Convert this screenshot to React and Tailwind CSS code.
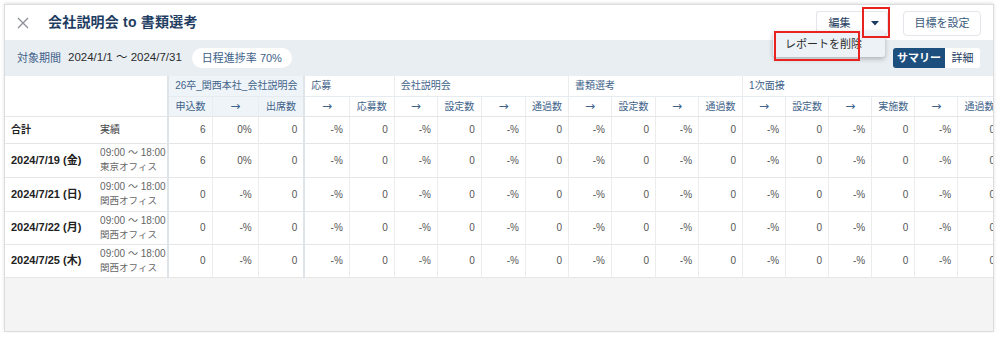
const groups = [
  { label: "26卒_関西本社_会社説明会", cols: ["申込数", "→", "出席数"], tint: true },
  { label: "応募", cols: ["→", "応募数"] },
  { label: "会社説明会", cols: ["→", "設定数", "→", "通過数"] },
  { label: "書類選考", cols: ["→", "設定数", "→", "通過数"] },
  { label: "1次面接", cols: ["→", "設定数", "→", "実施数", "→", "通過数"] },
];

const widths = [44, 46, 46, 45, 45, 43, 44, 44, 43, 43, 44, 43, 44, 43, 43, 43, 43, 43, 43];

const rest = Array.from({ length: 8 }).flatMap(() => ["-%", "0"]);
const filled = ["6", "0%", "0", ...rest];
const empty = ["0", "-%", "0", ...rest];

const rows = [
  { date: "2024/7/19 (金)", office: "東京オフィス", values: filled },
  { date: "2024/7/21 (日)", office: "関西オフィス", values: empty },
  { date: "2024/7/22 (月)", office: "関西オフィス", values: empty },
  { date: "2024/7/25 (木)", office: "関西オフィス", values: empty },
];

// index of the first column in each group, for the stronger left border
const groupStart = [0, 3];

const cellBorder = (i) =>
  groupStart.includes(i) ? "border-l-2 border-l-[#dfe4e9]" : "border-l border-l-[#ececec]";

const App = () => {
  return (
    <div className="w-[998px] h-[337px] bg-white pt-[4px] pl-[4px] font-['Liberation_Sans','Noto_Sans_CJK_JP',sans-serif]">
      <div className="relative w-[990px] h-[328px] border border-[#dcdcdc] shadow-[0_-1px_3px_rgba(0,0,0,0.12)] flex flex-col overflow-hidden">
        {/* header */}
        <div className="h-[35px] shrink-0 flex items-center bg-white">
          <div className="w-[43px] pl-[12px]">
            <svg width="12" height="12" viewBox="0 0 12 12" className="text-[#8a8f95]">
              <path d="M1 1 L11 11 M11 1 L1 11" stroke="currentColor" strokeWidth="1.3" fill="none" />
            </svg>
          </div>
          <h1 className="text-[14px] font-bold text-[#1f3d62] tracking-[0.2px]">会社説明会 to 書類選考</h1>
          <div className="ml-auto flex items-center pr-[12px]">
            <div className="flex h-[24px] mt-[1px]">
              <button className="w-[46px] h-full border border-[#e3e6ea] border-r-0 rounded-l-[3px] text-[11px] text-[#1f3d62] bg-white">
                編集
              </button>
              <button className="w-[26px] h-full border border-[#e3e6ea] rounded-r-[3px] bg-white flex items-center justify-center">
                <svg width="8" height="5" viewBox="0 0 8 5">
                  <path d="M0 0 L8 0 L4 4.5 Z" fill="#1f3d62" />
                </svg>
              </button>
            </div>
            <button className="ml-[15px] w-[78px] h-[25px] mt-[1px] border border-[#e3e6ea] rounded-[4px] text-[11px] text-[#3a5a7c] bg-white">
              目標を設定
            </button>
          </div>
        </div>

        {/* period bar */}
        <div className="h-[36px] shrink-0 bg-[#e9eef3] flex items-center pl-[12px] pr-[13px]">
          <span className="text-[11px] text-[#3d6088]">対象期間</span>
          <span className="ml-[7px] text-[11.5px] text-[#2b2b2b]">2024/1/1 ～ 2024/7/31</span>
          <span className="ml-[10px] h-[20px] px-[10px] rounded-full bg-white text-[11px] text-[#3d6088] flex items-center">
            日程進捗率 70%
          </span>
          <div className="ml-auto flex h-[20px]">
            <span className="w-[52px] bg-[#1d4f7e] text-white text-[11px] font-bold rounded-l-[3px] flex items-center justify-center">
              サマリー
            </span>
            <span className="w-[35px] bg-white text-[#1f3d62] text-[11px] rounded-r-[3px] flex items-center justify-center">
              詳細
            </span>
          </div>
        </div>

        {/* table */}
        <div className="shrink-0 overflow-hidden bg-white">
          <table className="table-fixed border-collapse w-[996px] text-[10px]">
            <colgroup>
              <col className="w-[87px]" />
              <col className="w-[76px]" />
              {widths.map((w, i) => (
                <col key={i} style={{ width: w }} />
              ))}
            </colgroup>
            <thead>
              <tr className="h-[20px]">
                <th colSpan={2} rowSpan={2} className="bg-white border-b border-[#e6e6e6]" />
                {groups.map((g, gi) => (
                  <th
                    key={gi}
                    colSpan={g.cols.length}
                    className={`text-left font-normal pl-[6px] text-[#3f6389] border-b border-[#e6ebf0] ${
                      g.tint ? "bg-[#eff4f9]" : "bg-white"
                    } ${gi < 2 ? "border-l-2 border-l-[#dfe4e9]" : "border-l border-l-[#ececec]"}`}
                  >
                    {g.label}
                  </th>
                ))}
              </tr>
              <tr className="h-[20px]">
                {groups.flatMap((g, gi) =>
                  g.cols.map((c, ci) => {
                    const idx = groups.slice(0, gi).reduce((s, x) => s + x.cols.length, 0) + ci;
                    return (
                      <th
                        key={`${gi}-${ci}`}
                        className={`font-normal text-center text-[#3f6389] border-b border-[#e6e6e6] ${
                          c === "→" ? "text-[12px] font-['DejaVu_Sans',sans-serif]" : ""
                        } ${g.tint ? "bg-[#eff4f9]" : "bg-white"} ${cellBorder(idx)}`}
                      >
                        {c}
                      </th>
                    );
                  })
                )}
              </tr>
            </thead>
            <tbody>
              <tr className="h-[27px] border-b border-[#e6e6e6]">
                <td className="pl-[6px] font-bold text-[#222]">合計</td>
                <td className="pl-[8px] text-[#444]">実績</td>
                {filled.map((v, i) => (
                  <td key={i} className={`text-right pr-[6px] text-[#555] ${cellBorder(i)}`}>
                    {v}
                  </td>
                ))}
              </tr>
              {rows.map((r, ri) => (
                <tr key={ri} className={`${ri < 2 ? "h-[34px]" : "h-[33px]"} border-b border-[#e6e6e6]`}>
                  <td className="pl-[6px] font-bold text-[11px] text-[#222] whitespace-nowrap">{r.date}</td>
                  <td className="pl-[8px] text-[#666] leading-[14px]">
                    <div>09:00 ～ 18:00</div>
                    <div className="text-[9.5px]">{r.office}</div>
                  </td>
                  {r.values.map((v, i) => (
                    <td key={i} className={`text-right pr-[6px] text-[#555] ${cellBorder(i)}`}>
                      {v}
                    </td>
                  ))}
                </tr>
              ))}
            </tbody>
          </table>
        </div>

        <div className="flex-1 bg-[#f4f4f4]" />

        {/* dropdown menu */}
        <div className="absolute left-[768px] top-[26px] w-[112px] h-[26px] bg-[#edf2f7] rounded-[3px] shadow-[0_2px_5px_rgba(0,0,0,0.25)] flex items-center pl-[12px] text-[11px] text-[#2b2b2b]">
          レポートを削除
        </div>

        {/* annotation boxes */}
        <div className="absolute left-[857px] top-[2px] w-[28px] h-[31px] border-2 border-[#e8231f]" />
        <div className="absolute left-[769px] top-[26px] w-[86px] h-[30px] border-2 border-[#e8231f]" />
      </div>
    </div>
  );
};

export default App;
